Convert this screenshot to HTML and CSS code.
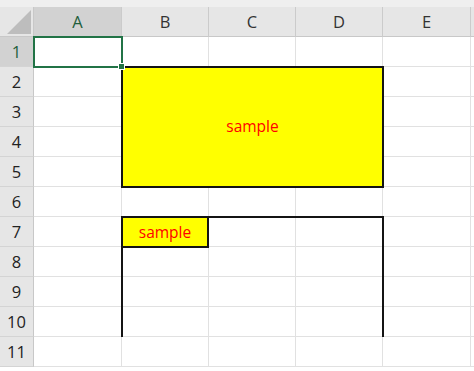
FILE: index.html
```html
<!DOCTYPE html>
<html>
<head>
    <meta charset="utf-8">
    <title>Sheet1</title>
    <link rel="stylesheet" href="styles.css">
</head>
<body>
    <div class="sheet">
        <div class="topstrip"></div>
        <div class="grid">
            <div class="corner"><span class="corner-tri"></span></div>
            <div class="colhead active">A</div>
            <div class="colhead">B</div>
            <div class="colhead">C</div>
            <div class="colhead">D</div>
            <div class="colhead">E</div>
            <div class="colhead rest"></div>

            <div class="rowhead active">1</div><div class="cell"></div><div class="cell"></div><div class="cell"></div><div class="cell"></div><div class="cell"></div><div class="cell rest"></div>
            <div class="rowhead">2</div><div class="cell"></div><div class="cell"></div><div class="cell"></div><div class="cell"></div><div class="cell"></div><div class="cell rest"></div>
            <div class="rowhead">3</div><div class="cell"></div><div class="cell"></div><div class="cell"></div><div class="cell"></div><div class="cell"></div><div class="cell rest"></div>
            <div class="rowhead">4</div><div class="cell"></div><div class="cell"></div><div class="cell"></div><div class="cell"></div><div class="cell"></div><div class="cell rest"></div>
            <div class="rowhead">5</div><div class="cell"></div><div class="cell"></div><div class="cell"></div><div class="cell"></div><div class="cell"></div><div class="cell rest"></div>
            <div class="rowhead">6</div><div class="cell"></div><div class="cell"></div><div class="cell"></div><div class="cell"></div><div class="cell"></div><div class="cell rest"></div>
            <div class="rowhead">7</div><div class="cell"></div><div class="cell"></div><div class="cell"></div><div class="cell"></div><div class="cell"></div><div class="cell rest"></div>
            <div class="rowhead">8</div><div class="cell"></div><div class="cell"></div><div class="cell"></div><div class="cell"></div><div class="cell"></div><div class="cell rest"></div>
            <div class="rowhead">9</div><div class="cell"></div><div class="cell"></div><div class="cell"></div><div class="cell"></div><div class="cell"></div><div class="cell rest"></div>
            <div class="rowhead">10</div><div class="cell"></div><div class="cell"></div><div class="cell"></div><div class="cell"></div><div class="cell"></div><div class="cell rest"></div>
            <div class="rowhead">11</div><div class="cell"></div><div class="cell"></div><div class="cell"></div><div class="cell"></div><div class="cell"></div><div class="cell rest"></div>
        </div>

        <!-- shapes drawn on top of the grid -->
        <div class="shape big">sample</div>
        <div class="shape frame"></div>
        <div class="shape small">sample</div>
        <div class="selection"><span class="handle"></span></div>
    </div>
</body>
</html>
```

FILE: styles.css
```css
html,
body {
    margin: 0;
    padding: 0;
    background: #fff;
    overflow: hidden;
}

.sheet {
    position: relative;
    width: 474px;
    height: 371px;
    overflow: hidden;
}

.topstrip {
    height: 7px;
    background: #efefef;
}

.grid {
    display: grid;
    grid-template-columns: 34px 88px 87px 87px 87px 88px 3px;
    grid-template-rows: 30px repeat(11, 30px);
    font-family: "Open Sans", "Noto Sans", sans-serif;
}

.corner {
    position: relative;
    background: #e6e6e6;
    border-right: 1px solid #c8c8c8;
    border-bottom: 1px solid #c8c8c8;
}

.corner-tri {
    position: absolute;
    right: 2px;
    bottom: 2px;
    width: 0;
    height: 0;
    border-left: 24px solid transparent;
    border-bottom: 24px solid #bdbdbd;
}

.colhead {
    display: flex;
    align-items: center;
    justify-content: center;
    background: #e6e6e6;
    color: #333;
    font-size: 16.5px;
    border-right: 1px solid #cbcbcb;
    border-bottom: 1px solid #c8c8c8;
}

.rowhead {
    display: flex;
    align-items: center;
    justify-content: center;
    background: #e6e6e6;
    color: #222;
    font-size: 16.5px;
    border-right: 1px solid #c8c8c8;
    border-bottom: 1px solid #d4d4d4;
}

.colhead.active,
.rowhead.active {
    background: #d2d2d2;
    color: #1e5e3b;
}

.colhead.rest {
    border-right: none;
}

.cell {
    border-right: 1px solid #e1e1e1;
    border-bottom: 1px solid #e1e1e1;
}

.cell.rest {
    border-right: none;
}

.shape {
    position: absolute;
    box-sizing: border-box;
    display: flex;
    align-items: center;
    justify-content: center;
    font-family: "Open Sans", "Noto Sans", sans-serif;
    font-size: 15.5px;
    color: #f00;
}

.big {
    left: 121px;
    top: 66px;
    width: 263px;
    height: 122px;
    padding-bottom: 2px;
    background: #ffff00;
    border: 2px solid #141414;
}

.frame {
    left: 121px;
    top: 216px;
    width: 263px;
    height: 121px;
    border: 2px solid #141414;
    border-bottom: none;
}

.small {
    left: 121px;
    top: 216px;
    width: 88px;
    height: 32px;
    background: #ffff00;
    border: 2px solid #141414;
}

.selection {
    position: absolute;
    left: 33px;
    top: 36px;
    width: 90px;
    height: 32px;
    box-sizing: border-box;
    border: 2px solid #217346;
}

.handle {
    position: absolute;
    right: -4px;
    bottom: -4px;
    width: 5px;
    height: 5px;
    background: #217346;
    border: 1px solid #fff;
}
```
